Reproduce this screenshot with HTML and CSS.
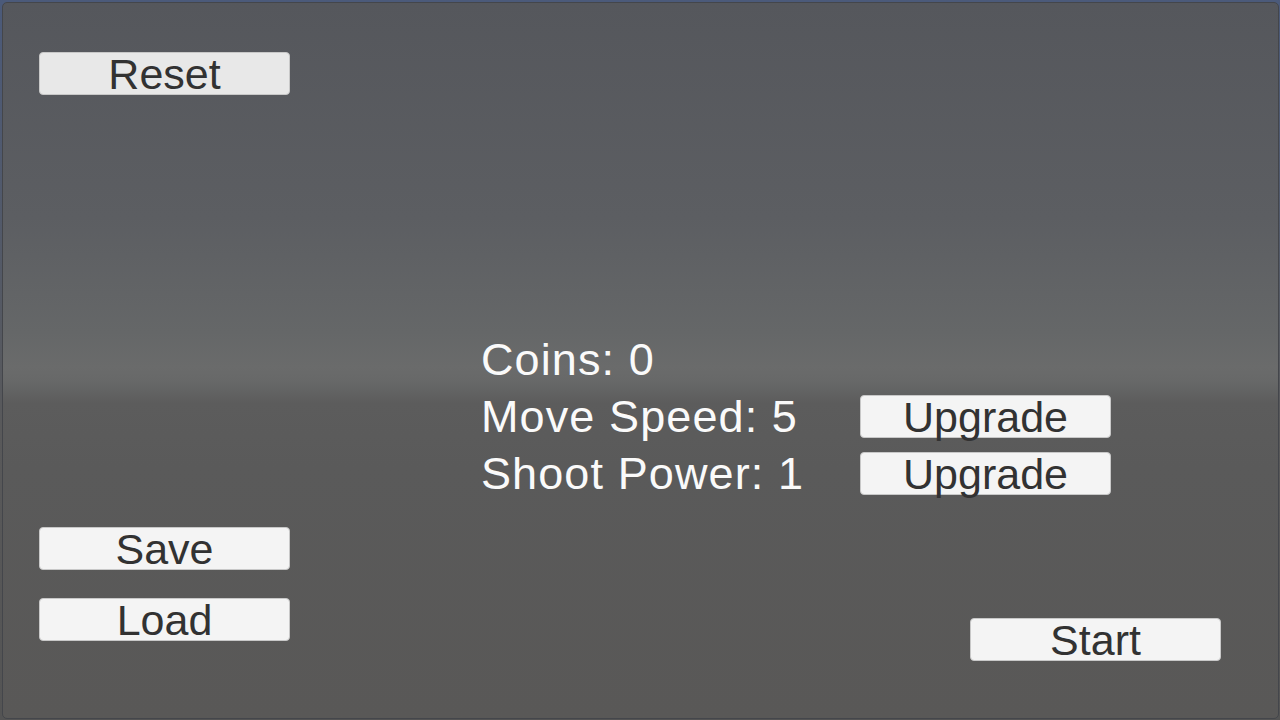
FILE: index.html
```html
<html lang="en">
<head>
    <meta charset="UTF-8">
    <meta name="viewport" content="width=device-width, initial-scale=1.0">
    <link rel="stylesheet" href="styles.css">
    <title>Shop</title>
</head>
<body>
    <div class="Screen">
        <div class="TopRow">
            <button class="Btn ResetBtn">Reset</button>
        </div>
        <div class="Stats">
            <span class="StatLabel">Coins: 0</span>
            <span></span>
            <span class="StatLabel">Move Speed: 5</span>
            <button class="Btn">Upgrade</button>
            <span class="StatLabel">Shoot Power: 1</span>
            <button class="Btn">Upgrade</button>
        </div>
        <div class="BottomRow">
            <div class="SaveCol">
                <button class="Btn">Save</button>
                <button class="Btn">Load</button>
            </div>
            <button class="Btn StartBtn">Start</button>
        </div>
    </div>
</body>
</html>
```

FILE: styles.css
```css
body{
    margin: 0;
    width: 1280px;
    height: 720px;
    overflow: hidden;
    background: linear-gradient(#4b5a7a, #59595a 60%, #545454);
    font-family: "Liberation Sans", Arial, sans-serif;
}
.Screen{
    box-sizing: border-box;
    margin: 2px 1px 0 2px;
    height: 717px;
    border: 1px solid #44464b;
    border-radius: 5px;
    background: linear-gradient(#55575c 0%, #5c5e62 30%, #656768 46%, #6a6b6b 51%, #676868 53%, #5c5c5c 56%, #5a5a5a 65%, #595857 100%);
}
.Btn{
    display: block;
    box-sizing: border-box;
    width: 251px;
    height: 43px;
    padding: 0;
    border: 1px solid #c8c8c8;
    border-radius: 4px;
    background-color: #f4f4f4;
    color: #323232;
    font-family: "Liberation Sans", Arial, sans-serif;
    font-size: 43px;
    line-height: 43px;
}
.ResetBtn{
    background-color: #e8e8e8;
}
.TopRow{
    padding-top: 49px;
    padding-left: 36px;
}
.Stats{
    display: grid;
    grid-template-columns: 379px 251px;
    grid-auto-rows: 57px;
    align-items: center;
    margin-top: 236px;
    padding-left: 478px;
}
.StatLabel{
    color: #fafafa;
    font-size: 45px;
    letter-spacing: 1.1px;
    white-space: nowrap;
}
.BottomRow{
    display: flex;
    justify-content: space-between;
    margin-top: 25px;
    padding-left: 36px;
    padding-right: 57px;
}
.SaveCol{
    display: flex;
    flex-direction: column;
    gap: 28px;
}
.StartBtn{
    margin-top: 91px;
}
```
